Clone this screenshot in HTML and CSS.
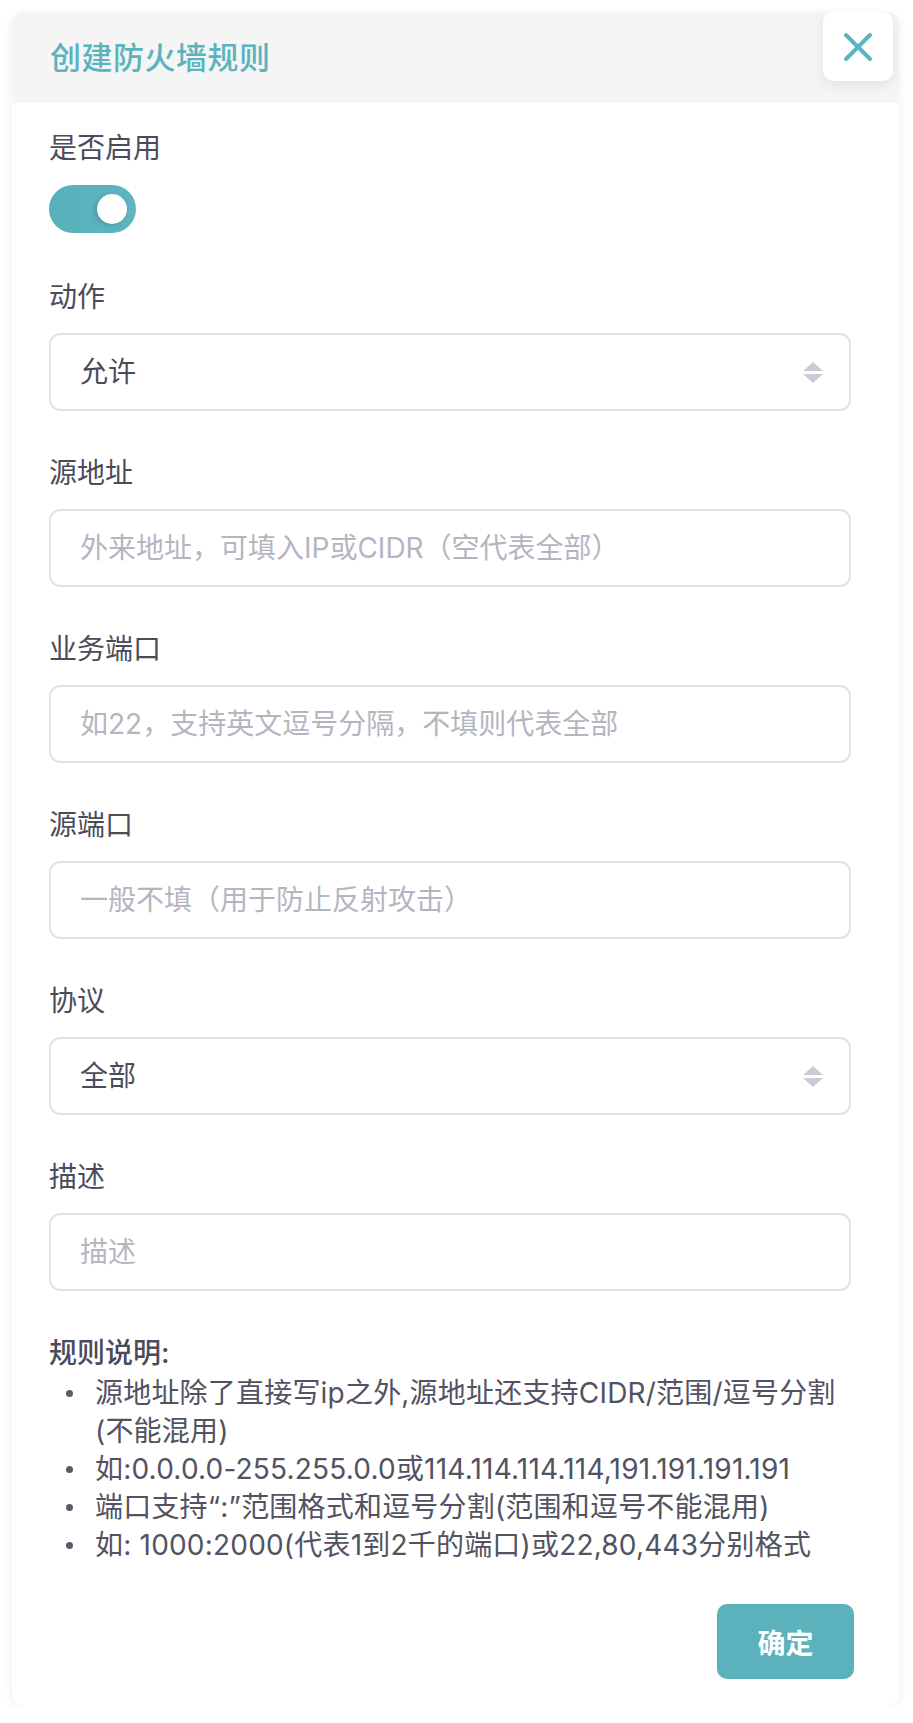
FILE: index.html
```html
<!DOCTYPE html>
<html lang="zh-CN">
<head>
<meta charset="utf-8">
<title>创建防火墙规则</title>
<link rel="stylesheet" href="styles.css">
</head>
<body>
<div class="card">
  <div class="header">
    <h1 class="title">创建防火墙规则</h1>
    <button class="close" type="button" aria-label="关闭">
      <svg width="30" height="30" viewBox="0 0 30 30"><path d="M3 3 L27 27 M27 3 L3 27" stroke="#5ab4bf" stroke-width="4" stroke-linecap="round" fill="none"/></svg>
    </button>
  </div>
  <div class="body">
    <div class="field field-toggle">
      <div class="label">是否启用</div>
      <div class="toggle"><div class="knob"></div></div>
    </div>
    <div class="field">
      <div class="label">动作</div>
      <div class="select"><span class="value">允许</span>
        <svg class="arrows" width="20" height="21" viewBox="0 0 20 21"><path d="M10 0 L20 9 L0 9 Z M0 12 L20 12 L10 21 Z" fill="#cbcbd6"/></svg>
      </div>
    </div>
    <div class="field">
      <div class="label">源地址</div>
      <input class="input" type="text" placeholder="外来地址，可填入IP或CIDR（空代表全部）">
    </div>
    <div class="field">
      <div class="label">业务端口</div>
      <input class="input" type="text" placeholder="如22，支持英文逗号分隔，不填则代表全部">
    </div>
    <div class="field">
      <div class="label">源端口</div>
      <input class="input" type="text" placeholder="一般不填（用于防止反射攻击）">
    </div>
    <div class="field">
      <div class="label">协议</div>
      <div class="select"><span class="value">全部</span>
        <svg class="arrows" width="20" height="21" viewBox="0 0 20 21"><path d="M10 0 L20 9 L0 9 Z M0 12 L20 12 L10 21 Z" fill="#cbcbd6"/></svg>
      </div>
    </div>
    <div class="field">
      <div class="label">描述</div>
      <input class="input" type="text" placeholder="描述">
    </div>
    <div class="rules">
      <div class="rules-title">规则说明:</div>
      <ul class="rules-list">
        <li><span class="dot"></span><span class="rule-text">源地址除了直接写ip之外,源地址还支持CIDR/范围/逗号分割(不能混用)</span></li>
        <li><span class="dot"></span><span class="rule-text">如:0.0.0.0-255.255.0.0或114.114.114.114,191.191.191.191</span></li>
        <li><span class="dot"></span><span class="rule-text">端口支持“:”范围格式和逗号分割(范围和逗号不能混用)</span></li>
        <li><span class="dot"></span><span class="rule-text">如: 1000:2000(代表1到2千的端口)或22,80,443分别格式</span></li>
      </ul>
    </div>
    <div class="footer">
      <button class="confirm" type="button">确定</button>
    </div>
  </div>
</div>
</body>
</html>
```
FILE: styles.css
```css
* { box-sizing: border-box; }
html, body { margin: 0; padding: 0; background: #ffffff; }
body {
  font-family: "Inter", "Noto Sans CJK SC", sans-serif;
  color: #4b4b5a;
}
.card {
  position: relative;
  margin: 12px 0 0 12px;
  width: 887px;
  background: #ffffff;
  border-radius: 12px;
  box-shadow: 0 2px 10px rgba(0, 0, 0, 0.07);
  overflow: hidden;
}
.header {
  height: 91px;
  background: #f5f5f5;
  display: flex;
  align-items: center;
  padding-left: 38px;
}
.title {
  margin: 0;
  font-size: 31px;
  font-weight: 500;
  letter-spacing: 0.5px;
  color: #5bb3be;
  line-height: 40px;
}
.close {
  position: absolute;
  top: 0;
  right: 6px;
  width: 70px;
  height: 69px;
  border: none;
  background: #ffffff;
  border-radius: 10px;
  box-shadow: 0 4px 14px rgba(0, 0, 0, 0.08);
  display: flex;
  align-items: center;
  justify-content: center;
  padding: 0;
}
.body {
  padding: 25px 48px 27px 37px;
  display: flex;
  flex-direction: column;
}
.field { display: flex; flex-direction: column; margin-bottom: 42px; }
.field-toggle { margin-bottom: 44px; }
.label {
  font-size: 28px;
  line-height: 40px;
  height: 40px;
  color: #4b4b5a;
  margin-bottom: 16px;
}
.field-toggle .label { margin-bottom: 17px; }
.toggle {
  width: 87px;
  height: 48px;
  border-radius: 24px;
  background: linear-gradient(90deg, #58b0ba 0%, #5db5bf 100%);
  display: flex;
  align-items: center;
  justify-content: flex-end;
  padding-right: 9px;
}
.knob {
  width: 30px;
  height: 30px;
  border-radius: 50%;
  background: #ffffff;
  box-shadow: -2px 1px 4px rgba(0, 0, 0, 0.18);
}
.select, .input {
  width: 802px;
  height: 78px;
  border: 2px solid #e2e2ea;
  border-radius: 11px;
  background: #ffffff;
  font-family: "Inter", "Noto Sans CJK SC", sans-serif;
  font-size: 28px;
  color: #4b4b5a;
}
.select {
  display: flex;
  align-items: center;
  justify-content: space-between;
  padding: 0 26px 0 29px;
}
.select .value { line-height: 40px; }
.input {
  padding: 0 29px;
  outline: none;
  display: block;
}
.input::placeholder { color: #b5b5c1; opacity: 1; }
.rules { margin-top: 1px; }
.rules-title {
  font-size: 28px;
  line-height: 38px;
  font-weight: 500;
  color: #4b4b5a;
}
.rules-list {
  list-style: none;
  margin: 2px 0 0 0;
  padding: 0;
}
.rules-list li {
  display: flex;
  align-items: flex-start;
  font-size: 28px;
  line-height: 38px;
  letter-spacing: 0.2px;
  color: #525262;
}
.dot {
  flex: none;
  width: 7px;
  height: 7px;
  border-radius: 50%;
  background: #5a5a6a;
  margin: 16px 22px 0 17px;
}
.rule-text { flex: 1; }
.footer {
  display: flex;
  justify-content: flex-end;
  margin-top: 40px;
  margin-right: -3px;
}
.confirm {
  width: 137px;
  height: 75px;
  border: none;
  border-radius: 10px;
  background: #5bb2bc;
  color: #ffffff;
  font-family: "Inter", "Noto Sans CJK SC", sans-serif;
  font-size: 28px;
  font-weight: 700;
  padding: 0;
}
```
